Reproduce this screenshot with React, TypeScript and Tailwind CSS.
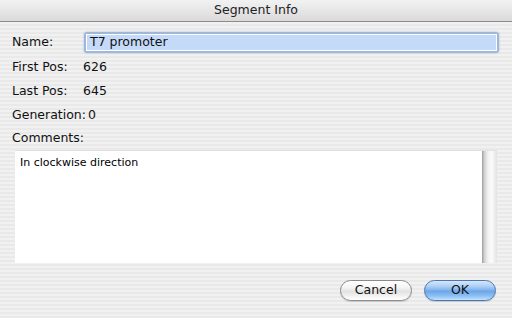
const FONT = "font-['DejaVu_Sans',sans-serif]";

const pinstripe =
  'bg-[repeating-linear-gradient(to_bottom,#f1f1f1_0px,#f1f1f1_2px,#e9e9e9_2px,#e9e9e9_4px)]';

function InfoRow({ label, value, h }: { label: string; value: string; h: string }) {
  return (
    <div className={`flex items-center gap-[2px] pl-[12px] ${h}`}>
      <span className="min-w-[69px] whitespace-nowrap">{label}</span>
      <span>{value}</span>
    </div>
  );
}

function AquaButton({ label, primary }: { label: string; primary?: boolean }) {
  const skin = primary
    ? 'border-[#4a76b4] bg-[linear-gradient(to_bottom,#d6e8fb_0%,#a9cdf5_30%,#6fa6ea_55%,#8ec2f5_80%,#c4e4fd_100%)]'
    : 'border-[#8a8a8a] bg-[linear-gradient(to_bottom,#ffffff_0%,#f4f4f4_35%,#e2e2e2_55%,#f3f3f3_80%,#ffffff_100%)]';
  return (
    <button
      className={`w-[72px] h-[21px] rounded-full border text-[12.5px] leading-none text-[#111] shadow-[0_1px_1px_rgba(0,0,0,0.15)] ${skin}`}
    >
      {label}
    </button>
  );
}

export default function App() {
  return (
    <div className={`w-[512px] h-[318px] flex flex-col overflow-hidden text-[12.5px] text-[#111] ${FONT}`}>
      {/* title bar */}
      <div className="h-[22px] shrink-0 flex items-center justify-center border-b border-[#8c8c8c] bg-[linear-gradient(to_bottom,#f2f2f2,#dadada)] text-[#222]">
        Segment Info
      </div>

      <div className={`flex-1 flex flex-col ${pinstripe}`}>
        {/* name field */}
        <div className="mt-[10px] h-[21px] flex items-center gap-[3px] pl-[12px] pr-[13px]">
          <span className="min-w-[69px]">Name:</span>
          <div className="flex-1 h-[21px] rounded-[3px] border-2 border-[#9fb7d8] shadow-[0_0_2px_rgba(90,130,190,0.5)]">
            <div className="h-full border border-white bg-[#c5daf8] pl-[3px] flex items-center leading-none">
              T7 promoter
            </div>
          </div>
        </div>

        <div className="mt-[3px] flex flex-col">
          <InfoRow label="First Pos:" value="626" h="h-[23px]" />
          <InfoRow label="Last Pos:" value="645" h="h-[24px]" />
          <InfoRow label="Generation:" value="0" h="h-[24px]" />
          <InfoRow label="Comments:" value="" h="h-[22px]" />
        </div>

        {/* comments box */}
        <div className="mt-[1px] mx-[15px] h-[113px] flex border-t border-[#e2e2e2]">
          <div className="flex-1 bg-white pl-[5px] pt-[5px] text-[11px] leading-[14px] text-black">
            In clockwise direction
          </div>
          <div className="w-[15px] bg-[linear-gradient(to_right,#9c9c9c_0%,#cfcfcf_15%,#f2f2f2_40%,#fbfbfb_65%,#e3e3e3_100%)]" />
        </div>

        {/* buttons */}
        <div className="mt-[17px] flex justify-end gap-[12px] pr-[16px]">
          <AquaButton label="Cancel" />
          <AquaButton label="OK" primary />
        </div>
      </div>
    </div>
  );
}
